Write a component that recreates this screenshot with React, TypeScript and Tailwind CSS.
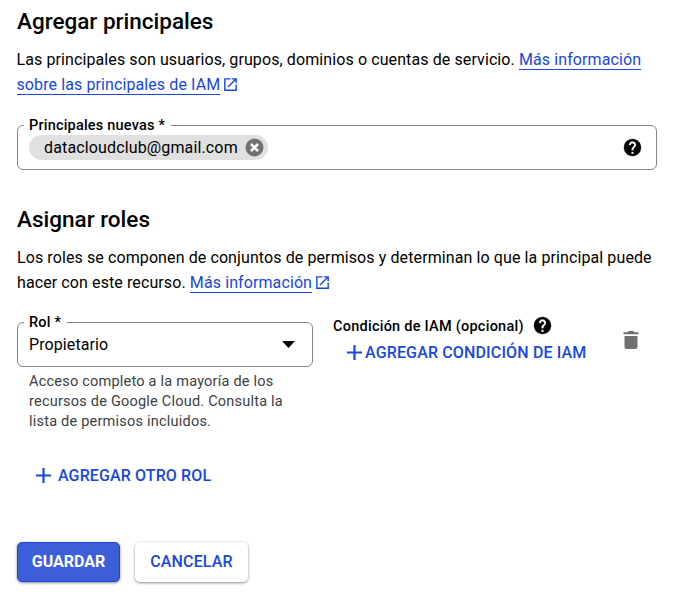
import type { ReactNode } from "react";

function ExternalIcon() {
  return (
    <svg className="ml-[2px] inline-block h-[17px] w-[17px] align-[-3px]" viewBox="0 0 24 24" fill="currentColor">
      <path d="M19 19H5V5h7V3H3v18h18v-9h-2v7zM14 3v2h3.6l-9.8 9.8 1.4 1.4L19 6.400V10h2V3h-7z" />
    </svg>
  );
}

function HelpIcon() {
  return (
    <svg className="h-[21px] w-[21px] shrink-0" viewBox="0 0 24 24" fill="#000">
      <path d="M12 2C6.480 2 2 6.480 2 12s4.480 10 10 10 10-4.480 10-10S17.520 2 12 2zm1 17h-2v-2h2v2zm2.070-7.750l-.9.920C13.450 12.900 13 13.500 13 15h-2v-.5c0-1.100.45-2.100 1.170-2.830l1.240-1.260c.37-.36.590-.86.590-1.410 0-1.100-.9-2-2-2s-2 .9-2 2H8c0-2.210 1.790-4 4-4s4 1.790 4 4c0 .88-.36 1.680-.93 2.250z" stroke="#fff" strokeWidth="0.300" />
    </svg>
  );
}

function PlusIcon() {
  return (
    <svg className="h-[15px] w-[15px] shrink-0" viewBox="0 0 15 15" stroke="currentColor" strokeWidth="2.200">
      <path d="M7.500 0v15M0 7.500h15" />
    </svg>
  );
}

function Link({ children }: { children: ReactNode }) {
  return (
    <a href="#" className="border-b border-[#1a47dc] text-[#1a47dc]">
      {children}
    </a>
  );
}

export default function App() {
  return (
    <main className="h-[596px] w-[696px] overflow-hidden bg-white pl-[17px] font-['Roboto',sans-serif] text-[16px] text-black">
      <h1 className="pt-[7px] text-[22.500px] leading-[28px] font-medium">Agregar principales</h1>
      <p className="mt-[12px] -ml-[0.500px] text-[16px] leading-[25px] tracking-[0.1px] whitespace-nowrap">
        Las principales son usuarios, grupos, dominios o cuentas de servicio. <Link>Más información</Link>
        <br />
        <Link>sobre las principales de IAM</Link>
        <span className="text-[#1a47dc]"><ExternalIcon /></span>
      </p>

      <fieldset className="mt-[20px] h-[53px] w-[640px] rounded-[6px] border border-[#80868b] pr-[13px] pl-[11px]">
        <legend className="-ml-[5px] h-[17px] pr-[6px] pl-[5px] text-[14.500px] leading-[17px] font-medium tracking-[0.2px]">
          Principales nuevas *
        </legend>
        <div className="mt-px flex items-center justify-between">
          <span className="flex h-[25px] w-[239px] items-center justify-between rounded-full bg-[#e0e0e0] pr-[4px] pl-[15px] tracking-[0.14px]">
            datacloudclub@gmail.com
            <svg className="h-[19px] w-[19px]" viewBox="0 0 19 19">
              <circle cx="9.500" cy="9.500" r="9" fill="#717171" />
              <path d="M6 6l7 7M13 6l-7 7" stroke="#fff" strokeWidth="2.600" />
            </svg>
          </span>
          <HelpIcon />
        </div>
      </fieldset>

      <h2 className="mt-[35px] text-[22.500px] leading-[28px] font-medium">Asignar roles</h2>
      <p className="mt-[12px] text-[16px] leading-[25px] tracking-[0.1px] whitespace-nowrap">
        Los roles se componen de conjuntos de permisos y determinan lo que la principal puede
        <br />
        hacer con este recurso. <Link>Más información</Link>
        <span className="text-[#1a47dc]"><ExternalIcon /></span>
      </p>

      <div className="mt-[19px] flex items-start">
        <div className="w-[296px]">
          <fieldset className="h-[53px] rounded-[6px] border border-[#80868b] pr-[17px] pl-[11px]">
            <legend className="-ml-[5px] h-[17px] pr-[6px] pl-[5px] text-[14.500px] leading-[17px] font-medium tracking-[0.2px]">
              Rol *
            </legend>
            <div className="flex h-[27px] items-center justify-between tracking-[0.1px]">
              Propietario
              <svg className="h-[7px] w-[13px]" viewBox="0 0 13 7">
                <path d="M0 0h13L6.500 7z" />
              </svg>
            </div>
          </fieldset>
          <p className="mt-[5px] pl-[12px] text-[14.500px] leading-[20px] tracking-[0.22px] whitespace-nowrap text-[#3c4043]">
            Acceso completo a la mayoría de los
            <br />
            recursos de Google Cloud. Consulta la
            <br />
            lista de permisos incluidos.
          </p>
        </div>
        <div className="ml-[20px] w-[290px] pt-px">
          <div className="flex h-[21px] items-center gap-[8px] text-[14.500px] font-medium whitespace-nowrap tracking-[0.25px]">
            <span className="pt-[2px]">Condición de IAM (opcional)</span>
            <HelpIcon />
          </div>
          <button className="ml-[14px] flex h-[33px] items-center gap-[3px] font-medium whitespace-nowrap tracking-[0.15px] text-[#1a47dc]">
            <PlusIcon />
            AGREGAR CONDICIÓN DE IAM
          </button>
        </div>
        <svg className="mt-[17px] h-[18px] w-[16px]" viewBox="0 0 16 18" fill="#717171">
          <path d="M.5 1.200h4l1-1.200h5l1 1.200h4v2H.5zM1.500 5h13v11a2 2 0 0 1-2 2h-9a2 2 0 0 1-2-2z" />
        </svg>
      </div>

      <button className="mt-[33px] ml-[19px] flex h-[21px] items-center gap-[7px] font-medium tracking-[0.12px] text-[#1a47dc]">
        <PlusIcon />
        AGREGAR OTRO ROL
      </button>

      <div className="mt-[56px] flex gap-[15px]">
        <button className="h-[40px] w-[103px] rounded-[5px] border border-[#1a47dc] bg-[#3c5fd9] font-bold text-white shadow-[0_1px_3px_rgba(0,0,0,0.45)]">
          GUARDAR
        </button>
        <button className="h-[40px] w-[113px] rounded-[5px] bg-white font-medium tracking-[0.15px] text-[#1a47dc] shadow-[0_1px_3px_rgba(0,0,0,0.45)]">
          CANCELAR
        </button>
      </div>
    </main>
  );
}
